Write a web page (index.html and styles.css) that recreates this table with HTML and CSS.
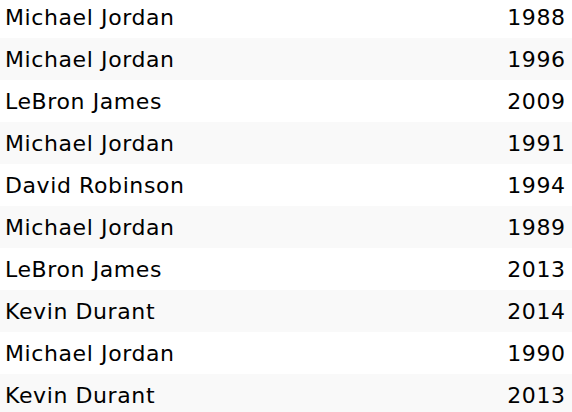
FILE: index.html
```html
<!DOCTYPE html>
<html>
<head>
<meta charset="utf-8">
<link rel="stylesheet" href="styles.css">
</head>
<body>
<div class="list">
  <div class="row"><span>Michael Jordan</span><span>1988</span></div>
  <div class="row alt"><span>Michael Jordan</span><span>1996</span></div>
  <div class="row"><span>LeBron James</span><span>2009</span></div>
  <div class="row alt"><span>Michael Jordan</span><span>1991</span></div>
  <div class="row"><span>David Robinson</span><span>1994</span></div>
  <div class="row alt"><span>Michael Jordan</span><span>1989</span></div>
  <div class="row"><span>LeBron James</span><span>2013</span></div>
  <div class="row alt"><span>Kevin Durant</span><span>2014</span></div>
  <div class="row"><span>Michael Jordan</span><span>1990</span></div>
  <div class="row alt"><span>Kevin Durant</span><span>2013</span></div>
</div>
</body>
</html>
```
FILE: styles.css
```css
html, body {
  margin: 0;
  padding: 0;
  background: #ffffff;
  overflow: hidden;
}
.list {
  margin-top: -4px;
  display: flex;
  flex-direction: column;
}
.row {
  height: 42px;
  display: flex;
  align-items: center;
  justify-content: space-between;
  padding: 0 7px 0 5px;
  font-family: "DejaVu Sans", sans-serif;
  font-size: 22px;
  letter-spacing: 0.6px;
  color: #000;
}
.row span:last-child {
  margin-right: -0.6px;
}
.alt {
  background: #f9f9f9;
}
```
